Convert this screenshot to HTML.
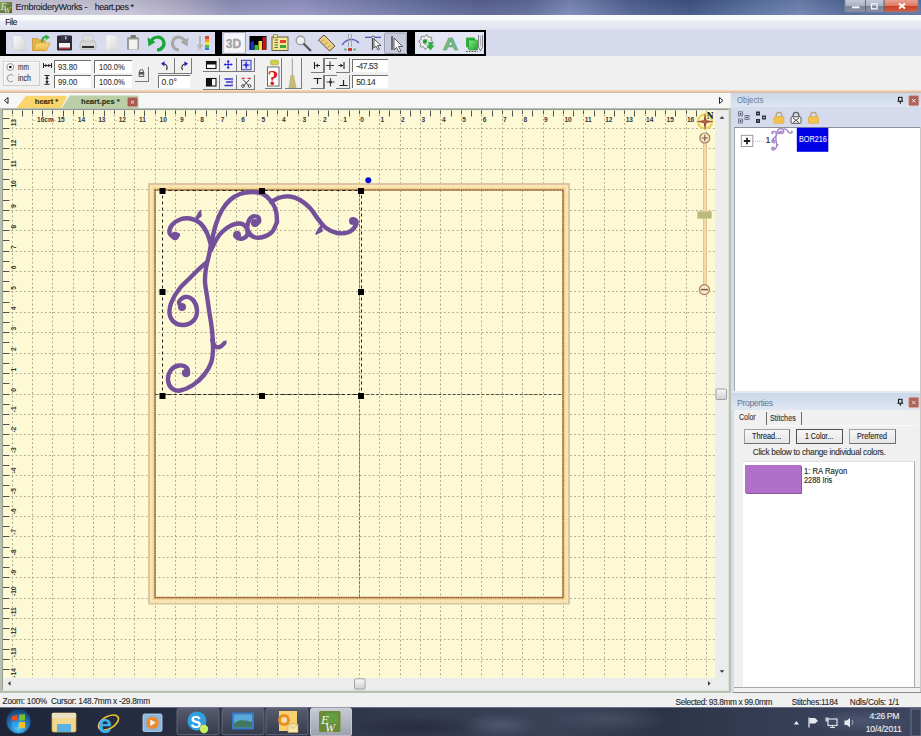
<!DOCTYPE html>
<html><head><meta charset="utf-8">
<style>
*{margin:0;padding:0;box-sizing:border-box}
html,body{width:921px;height:736px;overflow:hidden;background:#f0f0f0;font-family:"Liberation Sans",sans-serif;position:relative}
.a{position:absolute}
.t{position:absolute;white-space:nowrap;line-height:1;-webkit-text-stroke:0.12px currentColor}
.btn{position:absolute;background:linear-gradient(#f6f6f6,#e6e6e6);border:1px solid #a0a0a0;border-right-color:#707070;border-bottom-color:#707070}
.btn span{position:absolute;left:0;right:0;top:3.3px;text-align:center;font-size:8.3px;line-height:1;color:#222;white-space:nowrap;letter-spacing:-0.1px}
.ed{position:absolute;background:#fff;border-top:1.2px solid #707070;border-left:1.2px solid #707070}
.ed span{position:absolute;top:2.2px;font-size:8.4px;line-height:1;color:#3a3a3a;white-space:nowrap}
</style></head><body>
<!-- title bar -->
<div class="a" style="left:0;top:0;width:921px;height:15px;background:linear-gradient(rgba(40,40,70,0.10),rgba(255,255,255,0.08)),linear-gradient(90deg,#cdcdda 0px,#c6c4d6 130px,#b0acc8 180px,#8e90b8 230px,#9494c2 300px,#7c82b0 360px,#64709e 420px,#586090 480px,#5c6a98 530px,#7886b6 570px,#4e6090 630px,#3c5282 690px,#5a72a2 760px,#6a80ae 800px,#4c6492 850px,#5870a0 921px)"></div>

<svg class="a" style="left:0;top:0" width="921" height="15" viewBox="0 0 921 15">
<defs>
<linearGradient id="wbmin" x1="0" y1="0" x2="0" y2="1"><stop offset="0" stop-color="#c4cad8"/><stop offset="0.5" stop-color="#a8b0c4"/><stop offset="0.55" stop-color="#7c8498"/><stop offset="1" stop-color="#8a92a8"/></linearGradient>
<linearGradient id="wbcl" x1="0" y1="0" x2="0" y2="1"><stop offset="0" stop-color="#eaa090"/><stop offset="0.5" stop-color="#dc7a64"/><stop offset="0.55" stop-color="#c84020"/><stop offset="1" stop-color="#d06048"/></linearGradient>
<linearGradient id="appic" x1="0" y1="0" x2="1" y2="1"><stop offset="0" stop-color="#8aa060"/><stop offset="1" stop-color="#4a6028"/></linearGradient>
</defs>
<rect x="0" y="2" width="12" height="11" fill="url(#appic)"/>
<text x="0.5" y="10" font-size="10" font-style="italic" fill="#d8e8c8" font-family="Liberation Serif">E</text>
<text x="3.5" y="13" font-size="8.5" font-style="italic" fill="#d8e8c8" font-family="Liberation Serif">W</text>
<rect x="845" y="-1" width="73" height="13" rx="2" fill="none" stroke="#8890a8" stroke-width="0.8"/>
<rect x="845.3" y="0" width="20" height="11.6" fill="url(#wbmin)"/>
<rect x="865.7" y="0" width="18.2" height="11.6" fill="url(#wbmin)"/>
<rect x="884.3" y="0" width="33.5" height="11.6" fill="url(#wbcl)"/>
<path d="M865.5 0V12M884 0V12" stroke="#58607a" stroke-width="0.8"/>
<rect x="852" y="6.3" width="7.5" height="2" fill="#f4f4f8"/>
<rect x="871.5" y="3.8" width="5.5" height="5" fill="none" stroke="#f4f4f8" stroke-width="1.3"/>
<path d="M899 3.5L905 8.5M905 3.5L899 8.5" stroke="#fff" stroke-width="1.8"/>
</svg>
<!-- menu -->
<div class="a" style="left:0;top:15px;width:921px;height:15px;background:linear-gradient(#fbfbfd 0px,#f7f8fb 5px,#e8eaf4 6.5px,#e3e6f1 13px,#dde0ee 15px)"></div>

<!-- toolbar row -->
<div class="a" style="left:0;top:30px;width:921px;height:26px;background:#d6d9eb"></div>
<div class="a" style="left:0;top:30px;width:486px;height:26px;background:#000"></div>
<div class="a" style="left:6px;top:32px;width:209px;height:22px;background:#d9dcee"></div>
<div class="a" style="left:222px;top:32px;width:185px;height:22px;background:#d9dcee"></div>
<div class="a" style="left:415px;top:32px;width:69px;height:22px;background:#e4e7f3"></div>
<!-- row 2 -->
<div class="a" style="left:0;top:56px;width:921px;height:35px;background:#f0f0f0"></div>
<div class="a" style="left:0;top:89.8px;width:921px;height:3.6px;background:linear-gradient(#f8e0cc,#e8c8aa 50%,#d2b29a)"></div>
<div class="a" style="left:2.5px;top:60.5px;width:37.5px;height:25.5px;border:1px solid #cfcfcf;box-shadow:inset 1px 1px 0 #fff"></div>
<svg class="a" style="left:0;top:56px" width="60" height="35" viewBox="0 56 60 35"><circle cx="10.3" cy="67" r="3.4" fill="#fff" stroke="#8a8a8a" stroke-width="0.9"/><circle cx="10.3" cy="67" r="1.3" fill="#111"/><path d="M13.2 75.5A3.6 3.6 0 1 0 12.8 81.2" fill="none" stroke="#8a8a8a" stroke-width="0.9"/><path d="M43 65.5H51.5M43.5 63V68M51.5 63V68" stroke="#222" stroke-width="1"/><path d="M44 65.5L46.3 63.8V67.2ZM50.5 65.5L48.2 63.8V67.2Z" fill="#222"/><path d="M44.5 75.5H49.5M44.5 84.3H49.5M47 76V84" stroke="#222" stroke-width="1"/><path d="M47 76.5L45.2 79H48.8ZM47 83.5L45.2 81H48.8Z" fill="#222"/></svg>
<div class="ed" style="left:54px;top:60px;width:37px;height:12.5px"></div>
<div class="ed" style="left:54px;top:75px;width:37px;height:12.700000000000003px"></div>
<div class="ed" style="left:94.3px;top:60px;width:37.7px;height:12.799999999999997px"></div>
<div class="ed" style="left:94.3px;top:75.3px;width:37.7px;height:12.600000000000009px"></div>
<div class="ed" style="left:158.3px;top:75.3px;width:32.0px;height:12.299999999999997px"></div>
<div class="ed" style="left:351.5px;top:58.6px;width:36.89999999999998px;height:13.399999999999999px"></div>
<div class="ed" style="left:351.5px;top:75px;width:36.89999999999998px;height:13px"></div>
<div class="a" style="left:134.5px;top:67.3px;width:14.099999999999994px;height:14.5px;border-right:1.3px solid #7a7a7a;border-bottom:1.3px solid #7a7a7a"></div>
<div class="a" style="left:157.7px;top:57.5px;width:17.30000000000001px;height:16.5px;border-right:1.3px solid #7a7a7a;border-bottom:1.3px solid #7a7a7a"></div>
<div class="a" style="left:175px;top:57.5px;width:17px;height:16.5px;border-right:1.3px solid #7a7a7a;border-bottom:1.3px solid #7a7a7a"></div>
<div class="a" style="left:203.3px;top:57.5px;width:16.899999999999977px;height:14.700000000000003px;border-right:1.3px solid #7a7a7a;border-bottom:1.3px solid #7a7a7a"></div>
<div class="a" style="left:203.3px;top:74.8px;width:16.899999999999977px;height:14.799999999999997px;border-right:1.3px solid #7a7a7a;border-bottom:1.3px solid #7a7a7a"></div>
<div class="a" style="left:220.2px;top:57.5px;width:17.0px;height:14.700000000000003px;border-right:1.3px solid #7a7a7a;border-bottom:1.3px solid #7a7a7a"></div>
<div class="a" style="left:220.2px;top:74.8px;width:17.0px;height:14.799999999999997px;border-right:1.3px solid #7a7a7a;border-bottom:1.3px solid #7a7a7a"></div>
<div class="a" style="left:237.2px;top:57.5px;width:17.400000000000006px;height:14.700000000000003px;border-right:1.3px solid #7a7a7a;border-bottom:1.3px solid #7a7a7a"></div>
<div class="a" style="left:237.2px;top:74.8px;width:17.400000000000006px;height:14.799999999999997px;border-right:1.3px solid #7a7a7a;border-bottom:1.3px solid #7a7a7a"></div>
<div class="a" style="left:265.4px;top:57.5px;width:16.600000000000023px;height:31.700000000000003px;border-right:1.3px solid #7a7a7a;border-bottom:1.3px solid #7a7a7a"></div>
<div class="a" style="left:284.6px;top:57.5px;width:17.399999999999977px;height:31.700000000000003px;border-right:1.3px solid #7a7a7a;border-bottom:1.3px solid #7a7a7a"></div>
<div class="a" style="left:311px;top:58.4px;width:13.199999999999989px;height:14.199999999999996px;border-right:1.3px solid #7a7a7a;border-bottom:1.3px solid #7a7a7a"></div>
<div class="a" style="left:323.5px;top:58.4px;width:13.0px;height:14.199999999999996px;border-left:1.3px solid #7a7a7a;border-top:1.3px solid #7a7a7a;background:#f2f2f2"></div>
<div class="a" style="left:336px;top:58.4px;width:14px;height:14.199999999999996px;border-right:1.3px solid #7a7a7a;border-bottom:1.3px solid #7a7a7a"></div>
<div class="a" style="left:311px;top:75.3px;width:13.199999999999989px;height:13.900000000000006px;border-right:1.3px solid #7a7a7a;border-bottom:1.3px solid #7a7a7a"></div>
<div class="a" style="left:323.5px;top:75.3px;width:13.0px;height:13.900000000000006px;border-left:1.3px solid #7a7a7a;border-top:1.3px solid #7a7a7a;background:#f2f2f2"></div>
<div class="a" style="left:336px;top:75.3px;width:14px;height:13.900000000000006px;border-right:1.3px solid #7a7a7a;border-bottom:1.3px solid #7a7a7a"></div>
<svg class="a" style="left:0;top:0" width="400" height="93" viewBox="0 0 400 93">
<rect x="138.7" y="72" width="5.5" height="5" fill="#555"/><path d="M139.6 72.5V71A1.9 1.9 0 0 1 143.3 71V72.5" fill="none" stroke="#555" stroke-width="1"/><rect x="139.6" y="74.5" width="3.8" height="1.6" fill="#ddd"/>
<path d="M166.5 70C168 67 167 64 163.5 63.8" fill="none" stroke="#222" stroke-width="1.1"/><path d="M161 63.8L164.5 61.3V66.3Z" fill="#1a1ad0"/>
<path d="M182.5 70C181 67 182 64 185.5 63.8" fill="none" stroke="#222" stroke-width="1.1"/><path d="M188 63.8L184.5 61.3V66.3Z" fill="#1a1ad0"/>
<rect x="206.5" y="61.5" width="9.5" height="7" fill="#fff" stroke="#111" stroke-width="1.1"/><rect x="206.5" y="61.5" width="9.5" height="3" fill="#111"/>
<path d="M228.2 60.5V68.5M224.2 64.5H232.2" stroke="#2a2ad8" stroke-width="1.2"/><path d="M228.2 60L226.6 62H229.8ZM228.2 69L226.6 67H229.8ZM223.7 64.5L225.7 62.9V66.1ZM232.7 64.5L230.7 62.9V66.1Z" fill="#2a2ad8"/>
<rect x="241.5" y="60.3" width="9.5" height="9.5" fill="#dde" stroke="#3a3ab0" stroke-width="1"/><path d="M246.2 61.5V68.5M242.7 65H249.7" stroke="#2a2ad8" stroke-width="1.2"/><circle cx="246.2" cy="65" r="1.6" fill="#2a2ad8"/>
<rect x="206.5" y="78.5" width="9.5" height="7.5" fill="#fff" stroke="#111" stroke-width="1.1"/><rect x="206.5" y="78.5" width="5.5" height="7.5" fill="#111"/>
<path d="M224.5 79H233M226 82H233M224.5 85.5H233" stroke="#3030c8" stroke-width="1.3"/><path d="M232 78.5V86" stroke="#8888c8" stroke-width="1"/>
<path d="M241.5 78.3H245M247.5 78.3H251" stroke="#e04040" stroke-width="1.2"/>
<path d="M243 79.5L249 86M249.5 79.5L243.5 86" stroke="#333" stroke-width="0.9"/><circle cx="243" cy="86" r="1.4" fill="none" stroke="#333" stroke-width="0.8"/><circle cx="249.5" cy="86" r="1.4" fill="none" stroke="#333" stroke-width="0.8"/>
<rect x="270.5" y="60.2" width="8" height="4.6" rx="1.5" fill="#d4d048" stroke="#a0a030" stroke-width="0.6"/>
<rect x="267.5" y="67" width="11.5" height="19" fill="#fff" stroke="#6a6a6a" stroke-width="1"/>
<text x="267.6" y="85" font-size="21" font-weight="bold" fill="#e01818" font-family="Liberation Serif" textLength="11" lengthAdjust="spacingAndGlyphs">?</text>
<path d="M292.3 58.5V77" stroke="#9a9a9a" stroke-width="1"/>
<path d="M290.5 75L288.5 88H296.5L294 75Z" fill="#c4bc78"/>
<path d="M314.5 62V69M315.5 65.5H320" stroke="#222" stroke-width="1.1"/><path d="M315.5 65.5L318 63.5V67.5Z" fill="#222"/>
<path d="M330 61.5V70M326 65.5H334" stroke="#333" stroke-width="1.1"/>
<path d="M344 62V69M338.5 65.5H343" stroke="#222" stroke-width="1.1"/><path d="M343 65.5L340.5 63.5V67.5Z" fill="#222"/>
<path d="M313.5 78.5H321.5M317.5 78.5V84" stroke="#222" stroke-width="1.2"/>
<path d="M330.5 78V86.5M326.5 82H334.5" stroke="#444" stroke-width="1.1"/><circle cx="330.5" cy="82" r="1.5" fill="#333"/>
<path d="M339.5 85.5H347.5M343.5 80V85.5" stroke="#222" stroke-width="1.2"/>
</svg>
<svg class="a" style="left:0;top:0" width="921" height="93" viewBox="0 0 921 93">
<defs>
<linearGradient id="gpap" x1="0" y1="0" x2="1" y2="1"><stop offset="0" stop-color="#fafafa"/><stop offset="1" stop-color="#d8d8d8"/></linearGradient>
<linearGradient id="gfold" x1="0" y1="0" x2="0" y2="1"><stop offset="0" stop-color="#f8dc78"/><stop offset="1" stop-color="#e8b848"/></linearGradient>
<linearGradient id="ggreen" x1="0" y1="0" x2="0" y2="1"><stop offset="0" stop-color="#50e060"/><stop offset="1" stop-color="#109a30"/></linearGradient>
<linearGradient id="gsq" x1="0" y1="0" x2="1" y2="1"><stop offset="0" stop-color="#80f080"/><stop offset="1" stop-color="#20a030"/></linearGradient>
</defs>
<!-- new -->
<path d="M13 35.5H22L25 38.5V50H13Z" fill="url(#gpap)" stroke="#d0d0d0" stroke-width="0.8"/>
<path d="M22 35.5V38.5H25" fill="#e8e8e8" stroke="#c8c8c8" stroke-width="0.6"/>
<!-- open -->
<path d="M32.5 38.5H38L39.5 40H45V50.5H32.5Z" fill="#e6b448" stroke="#c89030" stroke-width="0.7"/>
<path d="M33 50.5L36 43H50L46.5 50.5Z" fill="url(#gfold)" stroke="#d09a38" stroke-width="0.7"/>
<path d="M42 42C42 38 44 36.5 47 37" fill="none" stroke="#30b040" stroke-width="2.2"/>
<path d="M45.5 34.5L50 37.2L46 40Z" fill="#30b040"/>
<!-- save -->
<rect x="57" y="35.5" width="15" height="15" rx="1" fill="#2c2c3a"/>
<rect x="59" y="43" width="11" height="6" fill="#f4f4f4"/>
<rect x="59" y="47.5" width="11" height="1.6" fill="#c03040"/>
<rect x="61" y="35.5" width="7" height="5" fill="#3a3a4a"/>
<rect x="65" y="36.3" width="1.5" height="3" fill="#bbb"/>
<!-- print -->
<rect x="83" y="35" width="10" height="7" fill="#e0e0e0" stroke="#c0c0c0" stroke-width="0.6"/>
<rect x="80" y="41" width="16" height="8.5" rx="2" fill="#d4d4d4" stroke="#b0b0b0" stroke-width="0.6"/>
<rect x="82" y="46" width="12" height="2" fill="#303030"/>
<!-- copy -->
<path d="M106 35H115L118 38V50H106Z" fill="url(#gpap)" stroke="#d8d8d8" stroke-width="0.7"/>
<!-- paste -->
<rect x="127" y="37" width="12" height="13" rx="1.5" fill="#9a9a9a"/>
<rect x="129" y="39.5" width="8.5" height="10" fill="#f2f2f2"/>
<rect x="130.5" y="35" width="5.5" height="3" rx="1" fill="#7a7a7a"/>
<!-- undo -->
<path d="M151 42.5C152 36 161 35.5 163.5 41C165.5 46 161 50 157 50" fill="none" stroke="#18a838" stroke-width="3.2"/>
<path d="M147.5 37.5L155.5 42L148.5 46.5Z" fill="#18a838"/>
<!-- redo -->
<path d="M185 42.5C184 36 175 35.5 173 41C171 46 175 50 179 50" fill="none" stroke="#a8a8a8" stroke-width="3.2"/>
<path d="M188.5 37.5L180.5 42L187.5 46.5Z" fill="#a8a8a8"/>
<!-- sort -->
<path d="M200 36V46" stroke="#b8b8b8" stroke-width="2"/>
<path d="M196.5 44.5H203.5L200 50Z" fill="#b8b8b8"/>
<path d="M197 50H204" stroke="#c8c8c8" stroke-width="1"/>
<rect x="205" y="36" width="4" height="3" fill="#e04040"/>
<rect x="205" y="39" width="4" height="3" fill="#f0a020"/>
<rect x="205" y="42" width="4" height="3" fill="#f0e040"/>
<rect x="205" y="45" width="4" height="2.5" fill="#40c040"/>
<rect x="205" y="47.5" width="4" height="2.5" fill="#3080e0"/>
<!-- 3D pressed -->
<rect x="223" y="32.5" width="22.5" height="21" fill="#eceef6" stroke="#a4a8b8" stroke-width="1"/>
<rect x="225" y="34.5" width="18.5" height="17" fill="#f6f6fa"/>
<text x="225.8" y="48" font-size="12" font-weight="bold" fill="#a4a4a4" stroke="#9a9a9a" stroke-width="0.3" font-family="Liberation Sans" textLength="15.5" lengthAdjust="spacingAndGlyphs">3D</text>
<!-- bar chart -->
<rect x="249.5" y="36" width="17" height="14" fill="#000"/>
<rect x="250.5" y="41.5" width="3.5" height="8.5" fill="#1030d0"/>
<rect x="254.5" y="45" width="3.5" height="5" fill="#30c040"/>
<rect x="258.5" y="41" width="3.5" height="9" fill="#f0e030"/>
<rect x="262.5" y="37" width="3.5" height="13" fill="#d01010"/>
<!-- thread list -->
<rect x="272" y="37" width="16" height="13.5" fill="#f2ea90" stroke="#585030" stroke-width="0.9"/>
<rect x="273.5" y="34.8" width="4" height="3" fill="#f2ea90" stroke="#807040" stroke-width="0.7"/>
<rect x="280" y="40" width="6" height="3" fill="#e04030"/>
<rect x="280" y="45" width="6" height="3" fill="#40a040"/>
<path d="M274.5 40H278M274.5 42.5H278M274.5 45H278M274.5 47.5H278" stroke="#404040" stroke-width="0.8"/>
<!-- magnifier -->
<circle cx="300.5" cy="40.5" r="4.3" fill="#f0f0f0" stroke="#a0a0a0" stroke-width="1.4"/>
<path d="M303.5 43.5L311 51" stroke="#555" stroke-width="2.2"/>
<!-- ruler -->
<path d="M318.5 40L324 35L335 46L329.5 51Z" fill="#ecd080" stroke="#58503a" stroke-width="1"/>
<path d="M322 41.5L324 39.5M325 44.5L327 42.5M328 47.5L330 45.5" stroke="#806838" stroke-width="0.8"/>
<!-- needle -->
<path d="M342 45C347 38 354 38 359 43" fill="none" stroke="#5060c0" stroke-width="1.3"/>
<path d="M348.5 34V47M351.5 34V47" stroke="#a8a8a8" stroke-width="1"/>
<rect x="348" y="48" width="4" height="3" fill="#c04040"/>
<path d="M347 49.5L344.5 48V51ZM353 49.5L355.5 48V51Z" fill="#40a040"/>
<!-- pick -->
<path d="M365 37.3H381" stroke="#4050c0" stroke-width="1.2"/>
<circle cx="373" cy="37.3" r="1.3" fill="#fff" stroke="#333" stroke-width="0.7"/>
<path d="M372.5 38.5V50" stroke="#444" stroke-width="1.2"/>
<path d="M374 39V48L376 46L378 50L379.5 49.2L377.5 45.5H381Z" fill="#fff" stroke="#333" stroke-width="0.8"/>
<!-- pointer pressed -->
<rect x="384.5" y="33" width="22" height="20.5" rx="1" fill="#c8ccdc" stroke="#9ca0b2" stroke-width="1"/>
<path d="M392 36V50" stroke="#444" stroke-width="1.4"/>
<path d="M394 38V50L396.5 47.5L399 52L401 51L398.5 46.5H402.5Z" fill="#fff" stroke="#333" stroke-width="0.8"/>
<!-- gear -->
<path d="M433.20 42.00 L433.06 43.40 L431.17 44.14 L430.66 45.11 L431.09 47.09 L430.00 47.99 L428.14 47.17 L427.09 47.49 L426.00 49.20 L424.60 49.06 L423.86 47.17 L422.89 46.66 L420.91 47.09 L420.01 46.00 L420.83 44.14 L420.51 43.09 L418.80 42.00 L418.94 40.60 L420.83 39.86 L421.34 38.89 L420.91 36.91 L422.00 36.01 L423.86 36.83 L424.91 36.51 L426.00 34.80 L427.40 34.94 L428.14 36.83 L429.11 37.34 L431.09 36.91 L431.99 38.00 L431.17 39.86 L431.49 40.91Z" fill="#ececec" stroke="#8a8a8a" stroke-width="1"/>
<circle cx="426" cy="42" r="2.6" fill="#ffffff" stroke="#a0a0a0" stroke-width="0.6"/>
<circle cx="425" cy="41.5" r="2.2" fill="#2a9a40"/>
<rect x="428.5" y="42" width="4" height="4" fill="#30b040"/>
<path d="M426.5 45.5H434.5L430.5 50.5Z" fill="#30b040"/>
<!-- A -->
<text x="442.8" y="49.8" font-size="17" font-weight="bold" fill="#74bc84" stroke="#5a9a68" stroke-width="0.5" font-family="Liberation Sans" textLength="15.5" lengthAdjust="spacingAndGlyphs">A</text>
<!-- green squares -->
<rect x="466" y="37.5" width="9" height="10" rx="1" fill="#30b040"/>
<rect x="468.5" y="40" width="9" height="10" rx="1" fill="url(#gsq)" stroke="#208030" stroke-width="0.6"/>
<path d="M466 51.5H478" stroke="#505050" stroke-width="1.2" stroke-dasharray="1.6 1.2"/>
<path d="M478.5 35V47L480.5 51L482.5 47V35" fill="none" stroke="#686868" stroke-width="0.8"/><path d="M480.5 36V46" stroke="#909090" stroke-width="0.6"/>
</svg>
<!-- tab bar -->
<div class="a" style="left:0;top:93px;width:730px;height:15px;background:#f6f6f6"></div>
<svg class="a" style="left:0;top:93px" width="150" height="16" viewBox="0 93 150 16">
<path d="M4.5 100.5L8 97.5V103.5Z" fill="none" stroke="#222" stroke-width="1"/>
<path d="M16.5 108L26 95.8H65L67 97L61 108Z" fill="#f9d56c"/>
<path d="M61.5 108L69.5 95.6H136.5Q138.5 95.6 138.5 97.6V108Z" fill="#bccea6"/>
<path d="M61.3 108L69.3 95.6" stroke="#f4f4f4" stroke-width="0.8"/>
<rect x="127.5" y="97.5" width="10" height="9" rx="1.2" fill="#a8584e" stroke="#c89088" stroke-width="0.8"/>
<path d="M130.8 100.5L134.2 103.8M134.2 100.5L130.8 103.8" stroke="#f0e0e0" stroke-width="1"/>
</svg>


<!-- canvas frame -->
<div class="a" style="left:0;top:107.8px;width:731px;height:585.5px;background:#b8c0b4"></div>
<div class="a" style="left:2.3px;top:109.2px;width:727px;height:582px;background:#ececec;border-left:1.3px solid #949c8c;border-top:1.3px solid #949c8c;border-right:1px solid #dde4d6;border-bottom:1px solid #dde4d6"></div>
<svg class="a" style="left:0;top:0" width="921" height="736" viewBox="0 0 921 736">
<rect x="3" y="110.5" width="712" height="567.5" fill="#fdf9d5"/>
<path d="M12.5 110.5V678M32.5 110.5V678M52.5 110.5V678M73.5 110.5V678M93.5 110.5V678M114.5 110.5V678M134.5 110.5V678M155.5 110.5V678M175.5 110.5V678M195.5 110.5V678M216.5 110.5V678M236.5 110.5V678M257.5 110.5V678M277.5 110.5V678M298.5 110.5V678M318.5 110.5V678M338.5 110.5V678M359.5 110.5V678M379.5 110.5V678M400.5 110.5V678M420.5 110.5V678M440.5 110.5V678M461.5 110.5V678M481.5 110.5V678M502.5 110.5V678M522.5 110.5V678M543.5 110.5V678M563.5 110.5V678M583.5 110.5V678M604.5 110.5V678M624.5 110.5V678M645.5 110.5V678M665.5 110.5V678M686.5 110.5V678M706.5 110.5V678" stroke="#a9a78c" stroke-width="1" stroke-dasharray="1.8 2.4" fill="none"/>
<path d="M3 128.5H715M3 148.5H715M3 169.5H715M3 189.5H715M3 210.5H715M3 230.5H715M3 251.5H715M3 271.5H715M3 291.5H715M3 312.5H715M3 332.5H715M3 353.5H715M3 373.5H715M3 394.5H715M3 414.5H715M3 434.5H715M3 455.5H715M3 475.5H715M3 496.5H715M3 516.5H715M3 536.5H715M3 557.5H715M3 577.5H715M3 598.5H715M3 618.5H715M3 639.5H715M3 659.5H715" stroke="#adab90" stroke-width="1" stroke-dasharray="1.8 2.4" fill="none"/>
<path d="M22.5 110.5V116.5M12.5 110.5V114M42.5 110.5V116.5M32.5 110.5V114M63.5 110.5V116.5M52.5 110.5V114M83.5 110.5V116.5M73.5 110.5V114M104.5 110.5V116.5M93.5 110.5V114M124.5 110.5V116.5M114.5 110.5V114M144.5 110.5V116.5M134.5 110.5V114M165.5 110.5V116.5M155.5 110.5V114M185.5 110.5V116.5M175.5 110.5V114M206.5 110.5V116.5M195.5 110.5V114M226.5 110.5V116.5M216.5 110.5V114M246.5 110.5V116.5M236.5 110.5V114M267.5 110.5V116.5M257.5 110.5V114M287.5 110.5V116.5M277.5 110.5V114M308.5 110.5V116.5M298.5 110.5V114M328.5 110.5V116.5M318.5 110.5V114M349.5 110.5V116.5M338.5 110.5V114M369.5 110.5V116.5M359.5 110.5V114M389.5 110.5V116.5M379.5 110.5V114M410.5 110.5V116.5M400.5 110.5V114M430.5 110.5V116.5M420.5 110.5V114M451.5 110.5V116.5M440.5 110.5V114M471.5 110.5V116.5M461.5 110.5V114M492.5 110.5V116.5M481.5 110.5V114M512.5 110.5V116.5M502.5 110.5V114M532.5 110.5V116.5M522.5 110.5V114M553.5 110.5V116.5M543.5 110.5V114M573.5 110.5V116.5M563.5 110.5V114M594.5 110.5V116.5M583.5 110.5V114M614.5 110.5V116.5M604.5 110.5V114M634.5 110.5V116.5M624.5 110.5V114M655.5 110.5V116.5M645.5 110.5V114M675.5 110.5V116.5M665.5 110.5V114M696.5 110.5V116.5M686.5 110.5V114" stroke="#505050" stroke-width="1" fill="none"/>
<path d="M3 118.5H9.5M3 128.5H9.5M3 138.5H9.5M3 148.5H9.5M3 159.5H9.5M3 169.5H9.5M3 179.5H9.5M3 189.5H9.5M3 200.5H9.5M3 210.5H9.5M3 220.5H9.5M3 230.5H9.5M3 240.5H9.5M3 251.5H9.5M3 261.5H9.5M3 271.5H9.5M3 281.5H9.5M3 291.5H9.5M3 302.5H9.5M3 312.5H9.5M3 322.5H9.5M3 332.5H9.5M3 342.5H9.5M3 353.5H9.5M3 363.5H9.5M3 373.5H9.5M3 383.5H9.5M3 394.5H9.5M3 404.5H9.5M3 414.5H9.5M3 424.5H9.5M3 434.5H9.5M3 445.5H9.5M3 455.5H9.5M3 465.5H9.5M3 475.5H9.5M3 485.5H9.5M3 496.5H9.5M3 506.5H9.5M3 516.5H9.5M3 526.5H9.5M3 536.5H9.5M3 547.5H9.5M3 557.5H9.5M3 567.5H9.5M3 577.5H9.5M3 587.5H9.5M3 598.5H9.5M3 608.5H9.5M3 618.5H9.5M3 628.5H9.5M3 639.5H9.5M3 649.5H9.5M3 659.5H9.5M3 669.5H9.5" stroke="#505050" stroke-width="1" fill="none"/>
<text x="33.6" y="122.3" font-size="6.6" fill="#383838" font-family="Liberation Sans" font-weight="bold"><tspan fill="#606060" font-size="5.5" font-weight="normal">- </tspan>16cm</text>
<text x="54.0" y="122.3" font-size="6.6" fill="#383838" font-family="Liberation Sans" font-weight="bold"><tspan fill="#606060" font-size="5.5" font-weight="normal">- </tspan>15</text>
<text x="74.4" y="122.3" font-size="6.6" fill="#383838" font-family="Liberation Sans" font-weight="bold"><tspan fill="#606060" font-size="5.5" font-weight="normal">- </tspan>14</text>
<text x="94.8" y="122.3" font-size="6.6" fill="#383838" font-family="Liberation Sans" font-weight="bold"><tspan fill="#606060" font-size="5.5" font-weight="normal">- </tspan>13</text>
<text x="115.3" y="122.3" font-size="6.6" fill="#383838" font-family="Liberation Sans" font-weight="bold"><tspan fill="#606060" font-size="5.5" font-weight="normal">- </tspan>12</text>
<text x="135.7" y="122.3" font-size="6.6" fill="#383838" font-family="Liberation Sans" font-weight="bold"><tspan fill="#606060" font-size="5.5" font-weight="normal">- </tspan>11</text>
<text x="156.1" y="122.3" font-size="6.6" fill="#383838" font-family="Liberation Sans" font-weight="bold"><tspan fill="#606060" font-size="5.5" font-weight="normal">- </tspan>10</text>
<text x="176.5" y="122.3" font-size="6.6" fill="#383838" font-family="Liberation Sans" font-weight="bold"><tspan fill="#606060" font-size="5.5" font-weight="normal">- </tspan>9</text>
<text x="196.9" y="122.3" font-size="6.6" fill="#383838" font-family="Liberation Sans" font-weight="bold"><tspan fill="#606060" font-size="5.5" font-weight="normal">- </tspan>8</text>
<text x="217.4" y="122.3" font-size="6.6" fill="#383838" font-family="Liberation Sans" font-weight="bold"><tspan fill="#606060" font-size="5.5" font-weight="normal">- </tspan>7</text>
<text x="237.8" y="122.3" font-size="6.6" fill="#383838" font-family="Liberation Sans" font-weight="bold"><tspan fill="#606060" font-size="5.5" font-weight="normal">- </tspan>6</text>
<text x="258.2" y="122.3" font-size="6.6" fill="#383838" font-family="Liberation Sans" font-weight="bold"><tspan fill="#606060" font-size="5.5" font-weight="normal">- </tspan>5</text>
<text x="278.6" y="122.3" font-size="6.6" fill="#383838" font-family="Liberation Sans" font-weight="bold"><tspan fill="#606060" font-size="5.5" font-weight="normal">- </tspan>4</text>
<text x="299.0" y="122.3" font-size="6.6" fill="#383838" font-family="Liberation Sans" font-weight="bold"><tspan fill="#606060" font-size="5.5" font-weight="normal">- </tspan>3</text>
<text x="319.5" y="122.3" font-size="6.6" fill="#383838" font-family="Liberation Sans" font-weight="bold"><tspan fill="#606060" font-size="5.5" font-weight="normal">- </tspan>2</text>
<text x="339.9" y="122.3" font-size="6.6" fill="#383838" font-family="Liberation Sans" font-weight="bold"><tspan fill="#606060" font-size="5.5" font-weight="normal">- </tspan>1</text>
<text x="360.2" y="122.3" font-size="6.6" fill="#383838" font-family="Liberation Sans" font-weight="bold">0</text>
<text x="380.6" y="122.3" font-size="6.6" fill="#383838" font-family="Liberation Sans" font-weight="bold">1</text>
<text x="401.0" y="122.3" font-size="6.6" fill="#383838" font-family="Liberation Sans" font-weight="bold">2</text>
<text x="421.5" y="122.3" font-size="6.6" fill="#383838" font-family="Liberation Sans" font-weight="bold">3</text>
<text x="441.9" y="122.3" font-size="6.6" fill="#383838" font-family="Liberation Sans" font-weight="bold">4</text>
<text x="462.3" y="122.3" font-size="6.6" fill="#383838" font-family="Liberation Sans" font-weight="bold">5</text>
<text x="482.7" y="122.3" font-size="6.6" fill="#383838" font-family="Liberation Sans" font-weight="bold">6</text>
<text x="503.1" y="122.3" font-size="6.6" fill="#383838" font-family="Liberation Sans" font-weight="bold">7</text>
<text x="523.6" y="122.3" font-size="6.6" fill="#383838" font-family="Liberation Sans" font-weight="bold">8</text>
<text x="544.0" y="122.3" font-size="6.6" fill="#383838" font-family="Liberation Sans" font-weight="bold">9</text>
<text x="564.4" y="122.3" font-size="6.6" fill="#383838" font-family="Liberation Sans" font-weight="bold">10</text>
<text x="584.8" y="122.3" font-size="6.6" fill="#383838" font-family="Liberation Sans" font-weight="bold">11</text>
<text x="605.2" y="122.3" font-size="6.6" fill="#383838" font-family="Liberation Sans" font-weight="bold">12</text>
<text x="625.7" y="122.3" font-size="6.6" fill="#383838" font-family="Liberation Sans" font-weight="bold">13</text>
<text x="646.1" y="122.3" font-size="6.6" fill="#383838" font-family="Liberation Sans" font-weight="bold">14</text>
<text x="666.5" y="122.3" font-size="6.6" fill="#383838" font-family="Liberation Sans" font-weight="bold">15</text>
<text x="686.9" y="122.3" font-size="6.6" fill="#383838" font-family="Liberation Sans" font-weight="bold">16</text>
<text transform="translate(16 126.3) rotate(-90)" font-size="6.6" fill="#383838" font-family="Liberation Sans" font-weight="bold">13</text>
<text transform="translate(16 146.8) rotate(-90)" font-size="6.6" fill="#383838" font-family="Liberation Sans" font-weight="bold">12</text>
<text transform="translate(16 167.2) rotate(-90)" font-size="6.6" fill="#383838" font-family="Liberation Sans" font-weight="bold">11</text>
<text transform="translate(16 187.6) rotate(-90)" font-size="6.6" fill="#383838" font-family="Liberation Sans" font-weight="bold">10</text>
<text transform="translate(16 208.0) rotate(-90)" font-size="6.6" fill="#383838" font-family="Liberation Sans" font-weight="bold">9</text>
<text transform="translate(16 228.4) rotate(-90)" font-size="6.6" fill="#383838" font-family="Liberation Sans" font-weight="bold">8</text>
<text transform="translate(16 248.9) rotate(-90)" font-size="6.6" fill="#383838" font-family="Liberation Sans" font-weight="bold">7</text>
<text transform="translate(16 269.3) rotate(-90)" font-size="6.6" fill="#383838" font-family="Liberation Sans" font-weight="bold">6</text>
<text transform="translate(16 289.7) rotate(-90)" font-size="6.6" fill="#383838" font-family="Liberation Sans" font-weight="bold">5</text>
<text transform="translate(16 310.1) rotate(-90)" font-size="6.6" fill="#383838" font-family="Liberation Sans" font-weight="bold">4</text>
<text transform="translate(16 330.5) rotate(-90)" font-size="6.6" fill="#383838" font-family="Liberation Sans" font-weight="bold">3</text>
<text transform="translate(16 351.0) rotate(-90)" font-size="6.6" fill="#383838" font-family="Liberation Sans" font-weight="bold">2</text>
<text transform="translate(16 371.4) rotate(-90)" font-size="6.6" fill="#383838" font-family="Liberation Sans" font-weight="bold">1</text>
<text transform="translate(16 391.8) rotate(-90)" font-size="6.6" fill="#383838" font-family="Liberation Sans" font-weight="bold">0</text>
<text transform="translate(16 412.2) rotate(-90)" font-size="6.6" fill="#383838" font-family="Liberation Sans" font-weight="bold">-1</text>
<text transform="translate(16 432.6) rotate(-90)" font-size="6.6" fill="#383838" font-family="Liberation Sans" font-weight="bold">-2</text>
<text transform="translate(16 453.1) rotate(-90)" font-size="6.6" fill="#383838" font-family="Liberation Sans" font-weight="bold">-3</text>
<text transform="translate(16 473.5) rotate(-90)" font-size="6.6" fill="#383838" font-family="Liberation Sans" font-weight="bold">-4</text>
<text transform="translate(16 493.9) rotate(-90)" font-size="6.6" fill="#383838" font-family="Liberation Sans" font-weight="bold">-5</text>
<text transform="translate(16 514.3) rotate(-90)" font-size="6.6" fill="#383838" font-family="Liberation Sans" font-weight="bold">-6</text>
<text transform="translate(16 534.7) rotate(-90)" font-size="6.6" fill="#383838" font-family="Liberation Sans" font-weight="bold">-7</text>
<text transform="translate(16 555.2) rotate(-90)" font-size="6.6" fill="#383838" font-family="Liberation Sans" font-weight="bold">-8</text>
<text transform="translate(16 575.6) rotate(-90)" font-size="6.6" fill="#383838" font-family="Liberation Sans" font-weight="bold">-9</text>
<text transform="translate(16 596.0) rotate(-90)" font-size="6.6" fill="#383838" font-family="Liberation Sans" font-weight="bold">-10</text>
<text transform="translate(16 616.4) rotate(-90)" font-size="6.6" fill="#383838" font-family="Liberation Sans" font-weight="bold">-11</text>
<text transform="translate(16 636.8) rotate(-90)" font-size="6.6" fill="#383838" font-family="Liberation Sans" font-weight="bold">-12</text>
<text transform="translate(16 657.3) rotate(-90)" font-size="6.6" fill="#383838" font-family="Liberation Sans" font-weight="bold">-13</text>
<text transform="translate(16 677.7) rotate(-90)" font-size="6.6" fill="#383838" font-family="Liberation Sans" font-weight="bold">-14</text>
<path d="M719.5 97.5V103.5L723 100.5Z" fill="none" stroke="#222" stroke-width="1"/>
<path d="M719.6 118.8H724.4L722 116.3Z" fill="#333"/>
<path d="M719.6 670.3H724.4L722 672.8Z" fill="#333"/>
<path d="M708 681V685.8L710.5 683.4Z" fill="#333"/>
<path d="M10.5 681V685.8L8 683.4Z" fill="#333"/>
<defs><linearGradient id="thumb" x1="0" y1="0" x2="0" y2="1"><stop offset="0" stop-color="#f8f8f8"/><stop offset="1" stop-color="#d0d0d0"/></linearGradient></defs><rect x="716" y="389" width="10.5" height="10.5" rx="1" fill="url(#thumb)" stroke="#9a9a9a" stroke-width="0.9"/>
<rect x="354.5" y="678.8" width="10.5" height="10.3" rx="1" fill="url(#thumb)" stroke="#9a9a9a" stroke-width="0.9"/>
<!-- hoop -->
<rect x="149" y="184" width="420" height="419.6" fill="none" stroke="#dec6a0" stroke-width="2"/>
<rect x="151.2" y="186.2" width="415.6" height="415.2" fill="none" stroke="#fbe5b6" stroke-width="2.4"/>
<rect x="153.3" y="188.3" width="411.4" height="411" fill="none" stroke="#f2d68e" stroke-width="1.8"/>
<rect x="155" y="190" width="408" height="407.6" fill="none" stroke="#a87446" stroke-width="1.3"/>
<rect x="155" y="190" width="408" height="407.6" fill="none" stroke="#94603a" stroke-width="2" stroke-dasharray="1 1.2" opacity="0.6"/>
<!-- center lines -->
<path d="M359.5 190V598" stroke="#7a7a68" stroke-width="1" stroke-dasharray="3 1.3"/>
<path d="M155 394.5H563" stroke="#505048" stroke-width="1" stroke-dasharray="3 1.8"/>
<!-- selection -->
<path d="M162.5 190.5H361.5V394.5H162.5Z" fill="none" stroke="#222" stroke-width="1" stroke-dasharray="3 3"/>
<g fill="none" stroke="#74509a" stroke-linecap="round" stroke-linejoin="round">
<path d="M277.0 222.0C276.8 220.2 277.0 214.5 276.0 211.0C275.0 207.5 273.2 203.8 271.0 201.0C268.8 198.2 266.2 195.5 263.0 194.0C259.8 192.5 255.8 192.0 252.0 192.0C248.2 192.0 243.7 192.7 240.0 194.0C236.3 195.3 233.0 197.3 230.0 200.0C227.0 202.7 224.3 206.0 222.0 210.0C219.7 214.0 217.7 219.0 216.0 224.0C214.3 229.0 213.2 234.8 212.0 240.0C210.8 245.2 210.0 250.3 209.0 255.0C208.0 259.7 206.7 263.5 206.0 268.0C205.3 272.5 204.8 277.3 205.0 282.0C205.2 286.7 206.3 291.3 207.0 296.0C207.7 300.7 208.2 304.3 209.0 310.0C209.8 315.7 211.3 323.3 212.0 330.0C212.7 336.7 213.2 344.5 213.0 350.0C212.8 355.5 212.5 358.8 211.0 363.0C209.5 367.2 207.0 371.3 204.0 375.0C201.0 378.7 197.0 382.4 193.0 385.0C189.0 387.6 183.5 389.9 180.0 390.5C176.5 391.1 174.0 390.2 172.0 388.5C170.0 386.8 168.2 383.1 168.0 380.0C167.8 376.9 169.2 372.4 171.0 370.0C172.8 367.6 176.3 365.8 179.0 365.5C181.7 365.2 185.5 366.6 187.0 368.0C188.5 369.4 187.8 373.0 188.0 374.0" stroke-width="4.4"/>
<path d="M277.0 222.0C276.2 223.7 274.3 229.5 272.0 232.0C269.7 234.5 266.0 236.2 263.0 237.0C260.0 237.8 256.5 238.0 254.0 237.0C251.5 236.0 249.0 233.3 248.0 231.0C247.0 228.7 247.3 225.3 248.0 223.0C248.7 220.7 250.3 218.0 252.0 217.0C253.7 216.0 256.8 216.2 258.0 217.0C259.2 217.8 259.5 220.8 259.0 222.0C258.5 223.2 255.7 223.7 255.0 224.0" stroke-width="4.4"/>
<path d="M271.0 202.0C272.5 201.2 276.8 198.4 280.0 197.5C283.2 196.6 286.7 196.1 290.0 196.5C293.3 196.9 296.7 198.1 300.0 200.0C303.3 201.9 307.0 204.8 310.0 208.0C313.0 211.2 315.3 215.7 318.0 219.0C320.7 222.3 322.8 225.7 326.0 228.0C329.2 230.3 333.2 232.3 337.0 233.0C340.8 233.7 345.9 233.2 349.0 232.0C352.1 230.8 354.3 227.9 355.5 226.0C356.7 224.1 356.6 221.5 356.0 220.5C355.4 219.5 352.7 220.1 352.0 220.0" stroke-width="4.4"/>
<path d="M211.0 245.0C210.3 243.0 208.8 236.7 207.0 233.0C205.2 229.3 202.8 225.4 200.0 223.0C197.2 220.6 193.3 219.1 190.0 218.5C186.7 217.9 183.0 218.4 180.0 219.5C177.0 220.6 173.8 222.8 172.0 225.0C170.2 227.2 169.2 231.0 169.5 233.0C169.8 235.0 172.6 236.7 174.0 237.0C175.4 237.3 177.3 235.3 178.0 235.0" stroke-width="4.4"/>
<path d="M211.0 250.0C211.8 248.3 214.2 243.0 216.0 240.0C217.8 237.0 219.5 234.4 222.0 232.0C224.5 229.6 228.0 226.9 231.0 225.5C234.0 224.1 237.5 223.2 240.0 223.5C242.5 223.8 244.8 225.2 246.0 227.0C247.2 228.8 248.0 232.1 247.5 234.0C247.0 235.9 244.8 237.9 243.0 238.5C241.2 239.1 238.0 238.4 237.0 237.5C236.0 236.6 237.0 233.8 237.0 233.0" stroke-width="4.4"/>
<path d="M207.0 262.0C205.7 263.2 201.8 266.3 199.0 269.0C196.2 271.7 193.2 274.8 190.0 278.0C186.8 281.2 183.0 284.2 180.0 288.0C177.0 291.8 173.8 296.8 172.0 301.0C170.2 305.2 169.2 309.5 169.5 313.0C169.8 316.5 171.6 320.0 174.0 322.0C176.4 324.0 180.7 325.3 184.0 325.0C187.3 324.7 191.8 322.5 194.0 320.0C196.2 317.5 197.2 313.3 197.0 310.0C196.8 306.7 195.0 302.2 193.0 300.0C191.0 297.8 187.3 296.7 185.0 297.0C182.7 297.3 179.5 300.2 179.0 302.0C178.5 303.8 181.5 307.0 182.0 308.0" stroke-width="4.4"/>
<path d="M212.0 340.0C212.5 341.0 213.7 344.8 215.0 346.0C216.3 347.2 218.4 347.5 220.0 347.0C221.6 346.5 223.8 343.7 224.5 343.0" stroke-width="4.2"/>
</g><g fill="#74509a">
<circle cx="175" cy="236" r="4.2"/>
<circle cx="353" cy="221" r="4"/>
<circle cx="255" cy="223" r="4"/>
<circle cx="237" cy="235" r="4"/>
<circle cx="182" cy="307" r="4"/>
<circle cx="186" cy="373" r="4.2"/>
<path d="M195 221 L198 214 L200.5 210.5 L201 216Z" stroke="#74509a" stroke-width="1.5" stroke-linejoin="round"/>
<path d="M321 226 L318 230 L316 234 L322 231Z" stroke="#74509a" stroke-width="1.5" stroke-linejoin="round"/>
<path d="M218 346 L224 344 L226 341 L222 347Z" stroke="#74509a" stroke-width="1.5" stroke-linejoin="round"/>
</g>
<g fill="#000">
<rect x="159.5" y="188" width="6" height="6"/><rect x="259" y="188" width="6" height="6"/><rect x="358" y="188" width="6" height="6"/>
<rect x="159.5" y="289" width="6" height="6"/><rect x="358" y="289" width="6" height="6"/>
<rect x="159.5" y="393" width="6" height="6"/><rect x="259" y="393" width="6" height="6"/><rect x="358" y="393" width="6" height="6"/>
</g>
<circle cx="368.3" cy="180.3" r="3" fill="#0a10d8"/>
<!-- compass -->
<circle cx="705" cy="121.6" r="8.5" fill="#fcf0b0" opacity="0.5"/>
<circle cx="705" cy="121.6" r="7" fill="none" stroke="#ecd060" stroke-width="2"/>
<path d="M705 112.5L706.3 120.3L714 121.6L706.3 122.9L705 131L703.7 122.9L696 121.6L703.7 120.3Z" fill="#9a4a30"/>
<circle cx="705" cy="121.6" r="1.5" fill="#b86a48"/>
<text x="706.8" y="119.3" font-size="9.5" font-weight="bold" font-family="Liberation Serif" fill="#111">N</text>
<!-- zoom slider -->
<path d="M705 143V285" stroke="#e7c48c" stroke-width="4"/>
<path d="M705 143V285" stroke="#f7e0b8" stroke-width="1.5"/>
<circle cx="704.8" cy="138" r="5" fill="#fbe8c8" stroke="#a08058" stroke-width="1.2"/>
<path d="M701.5 138H708M704.8 134.7V141.3" stroke="#806048" stroke-width="1.2"/>
<circle cx="704.4" cy="289.6" r="5" fill="#fbe8c8" stroke="#a08058" stroke-width="1.2"/>
<path d="M701 289.6H708" stroke="#806048" stroke-width="1.5"/>
<rect x="697.5" y="211.5" width="14" height="6.8" fill="#b9bb7c" stroke="#d0cc98" stroke-width="0.8"/>
</svg>
<!-- right panel -->
<div class="a" style="left:731px;top:93px;width:190px;height:600px;background:#f0f0f0"></div>
<div class="a" style="left:731px;top:107px;width:3px;height:586px;background:#d6dce8"></div>
<div class="a" style="left:731px;top:93px;width:190px;height:14px;background:linear-gradient(#cbd8e8,#dde5f1)"></div>

<div class="a" style="left:731px;top:107px;width:190px;height:20px;background:#d5dbed"></div>
<svg class="a" style="left:731px;top:93px" width="190" height="60" viewBox="731 93 190 60">
<path d="M898.5 97.3V101M902 97.3V101M897.5 101.2H903.2M900.3 101.2V103.8" stroke="#111" stroke-width="1.1"/><path d="M898.3 97.3H902.3" stroke="#111" stroke-width="1"/>
<rect x="908.8" y="95.5" width="10" height="10.3" rx="1.2" fill="#b06058" stroke="#d8a8a0" stroke-width="0.8"/>
<path d="M912 99L915.5 102.5M915.5 99L912 102.5" stroke="#f4e4e4" stroke-width="1"/>
<g fill="#e4e8f2" stroke="#6a7288" stroke-width="0.9"><rect x="738.5" y="111.8" width="4" height="4"/><rect x="745" y="115.5" width="4" height="4"/><rect x="738.5" y="119" width="4" height="4"/></g><g fill="#2a3040"><rect x="739.7" y="113" width="1.6" height="1.6"/><rect x="746.2" y="116.7" width="1.6" height="1.6"/><rect x="739.7" y="120.2" width="1.6" height="1.6"/></g>
<path d="M742.5 114H744M742.5 121H744" stroke="#b0b8c8" stroke-width="0.7"/>
<g fill="#2a3040"><rect x="756" y="111.5" width="4" height="4"/><rect x="762" y="115.5" width="4" height="4"/><rect x="756" y="119" width="4" height="4"/></g>
<path d="M757 113.5H759M763 117.5H765M764 116.5V118.5M757 121H759" stroke="#ddd" stroke-width="0.6"/>
<g><path d="M776.2 117V115.2A2.8 2.8 0 0 1 781.8 115.2V117" fill="none" stroke="#b8a070" stroke-width="1.1"/><rect x="774" y="116.8" width="10" height="6.5" rx="0.8" fill="#f6c44c" stroke="#d8a030" stroke-width="0.6"/></g>
<g><path d="M793.2 117V115.2A2.8 2.8 0 0 1 798.8 115.2V117" fill="none" stroke="#606060" stroke-width="1.3"/><rect x="791" y="116.8" width="10" height="6.5" rx="0.8" fill="#fafafa" stroke="#404040" stroke-width="0.9"/><path d="M793 118L799 122.5M799 118L793 122.5" stroke="#333" stroke-width="0.9"/></g>
<g><path d="M810.7 117V115.2A2.8 2.8 0 0 1 816.3 115.2V117" fill="none" stroke="#b8a070" stroke-width="1.1"/><rect x="808.5" y="116.8" width="10" height="6.5" rx="0.8" fill="#f6c44c" stroke="#d8a030" stroke-width="0.6"/></g>
</svg>
<div class="a" style="left:734px;top:127px;width:186px;height:264px;background:#fff;border-top:1px solid #8c9098;border-left:1px solid #a4a8b2"></div>
<svg class="a" style="left:734px;top:127px" width="100" height="30" viewBox="734 127 100 30">
<rect x="741.3" y="135.3" width="11.5" height="11.2" fill="#fff" stroke="#909090" stroke-width="0.9"/>
<path d="M743.8 141H750.2M747 137.8V144.2" stroke="#222" stroke-width="1.8"/>
<path d="M753 141.2H764.5" stroke="#aaa" stroke-width="0.8" stroke-dasharray="1 1"/>
<g transform="translate(771.5 128.3) scale(0.108) translate(-165 -190)">
<g fill="none" stroke="#a888c8" stroke-linecap="round" stroke-linejoin="round">
<path d="M277.0 222.0C276.8 220.2 277.0 214.5 276.0 211.0C275.0 207.5 273.2 203.8 271.0 201.0C268.8 198.2 266.2 195.5 263.0 194.0C259.8 192.5 255.8 192.0 252.0 192.0C248.2 192.0 243.7 192.7 240.0 194.0C236.3 195.3 233.0 197.3 230.0 200.0C227.0 202.7 224.3 206.0 222.0 210.0C219.7 214.0 217.7 219.0 216.0 224.0C214.3 229.0 213.2 234.8 212.0 240.0C210.8 245.2 210.0 250.3 209.0 255.0C208.0 259.7 206.7 263.5 206.0 268.0C205.3 272.5 204.8 277.3 205.0 282.0C205.2 286.7 206.3 291.3 207.0 296.0C207.7 300.7 208.2 304.3 209.0 310.0C209.8 315.7 211.3 323.3 212.0 330.0C212.7 336.7 213.2 344.5 213.0 350.0C212.8 355.5 212.5 358.8 211.0 363.0C209.5 367.2 207.0 371.3 204.0 375.0C201.0 378.7 197.0 382.4 193.0 385.0C189.0 387.6 183.5 389.9 180.0 390.5C176.5 391.1 174.0 390.2 172.0 388.5C170.0 386.8 168.2 383.1 168.0 380.0C167.8 376.9 169.2 372.4 171.0 370.0C172.8 367.6 176.3 365.8 179.0 365.5C181.7 365.2 185.5 366.6 187.0 368.0C188.5 369.4 187.8 373.0 188.0 374.0" stroke-width="13"/>
<path d="M277.0 222.0C276.2 223.7 274.3 229.5 272.0 232.0C269.7 234.5 266.0 236.2 263.0 237.0C260.0 237.8 256.5 238.0 254.0 237.0C251.5 236.0 249.0 233.3 248.0 231.0C247.0 228.7 247.3 225.3 248.0 223.0C248.7 220.7 250.3 218.0 252.0 217.0C253.7 216.0 256.8 216.2 258.0 217.0C259.2 217.8 259.5 220.8 259.0 222.0C258.5 223.2 255.7 223.7 255.0 224.0" stroke-width="13"/>
<path d="M271.0 202.0C272.5 201.2 276.8 198.4 280.0 197.5C283.2 196.6 286.7 196.1 290.0 196.5C293.3 196.9 296.7 198.1 300.0 200.0C303.3 201.9 307.0 204.8 310.0 208.0C313.0 211.2 315.3 215.7 318.0 219.0C320.7 222.3 322.8 225.7 326.0 228.0C329.2 230.3 333.2 232.3 337.0 233.0C340.8 233.7 345.9 233.2 349.0 232.0C352.1 230.8 354.3 227.9 355.5 226.0C356.7 224.1 356.6 221.5 356.0 220.5C355.4 219.5 352.7 220.1 352.0 220.0" stroke-width="13"/>
<path d="M211.0 245.0C210.3 243.0 208.8 236.7 207.0 233.0C205.2 229.3 202.8 225.4 200.0 223.0C197.2 220.6 193.3 219.1 190.0 218.5C186.7 217.9 183.0 218.4 180.0 219.5C177.0 220.6 173.8 222.8 172.0 225.0C170.2 227.2 169.2 231.0 169.5 233.0C169.8 235.0 172.6 236.7 174.0 237.0C175.4 237.3 177.3 235.3 178.0 235.0" stroke-width="13"/>
<path d="M211.0 250.0C211.8 248.3 214.2 243.0 216.0 240.0C217.8 237.0 219.5 234.4 222.0 232.0C224.5 229.6 228.0 226.9 231.0 225.5C234.0 224.1 237.5 223.2 240.0 223.5C242.5 223.8 244.8 225.2 246.0 227.0C247.2 228.8 248.0 232.1 247.5 234.0C247.0 235.9 244.8 237.9 243.0 238.5C241.2 239.1 238.0 238.4 237.0 237.5C236.0 236.6 237.0 233.8 237.0 233.0" stroke-width="13"/>
<path d="M207.0 262.0C205.7 263.2 201.8 266.3 199.0 269.0C196.2 271.7 193.2 274.8 190.0 278.0C186.8 281.2 183.0 284.2 180.0 288.0C177.0 291.8 173.8 296.8 172.0 301.0C170.2 305.2 169.2 309.5 169.5 313.0C169.8 316.5 171.6 320.0 174.0 322.0C176.4 324.0 180.7 325.3 184.0 325.0C187.3 324.7 191.8 322.5 194.0 320.0C196.2 317.5 197.2 313.3 197.0 310.0C196.8 306.7 195.0 302.2 193.0 300.0C191.0 297.8 187.3 296.7 185.0 297.0C182.7 297.3 179.5 300.2 179.0 302.0C178.5 303.8 181.5 307.0 182.0 308.0" stroke-width="13"/>
<path d="M212.0 340.0C212.5 341.0 213.7 344.8 215.0 346.0C216.3 347.2 218.4 347.5 220.0 347.0C221.6 346.5 223.8 343.7 224.5 343.0" stroke-width="13"/>
</g><g fill="#a888c8">
<circle cx="175" cy="236" r="8.4"/>
<circle cx="353" cy="221" r="8"/>
<circle cx="255" cy="223" r="8"/>
<circle cx="237" cy="235" r="8"/>
<circle cx="182" cy="307" r="8"/>
<circle cx="186" cy="373" r="8.4"/>
</g></g>
<rect x="796.8" y="127.8" width="31.5" height="24" fill="#0000e6"/>
</svg>
<div class="a" style="left:731px;top:391px;width:190px;height:2px;background:#e4e8f0"></div>
<div class="a" style="left:731px;top:393px;width:190px;height:17px;background:linear-gradient(#c9d8ea,#dfe7f2)"></div>

<svg class="a" style="left:890px;top:393px" width="31" height="17" viewBox="890 393 31 17">
<path d="M898.5 399.3V403M902 399.3V403M897.5 403.2H903.2M900.3 403.2V405.8" stroke="#111" stroke-width="1.1"/><path d="M898.3 399.3H902.3" stroke="#111" stroke-width="1"/>
<rect x="908.8" y="397.3" width="10" height="10.3" rx="1.2" fill="#b06058" stroke="#d8a8a0" stroke-width="0.8"/>
<path d="M912 400.8L915.5 404.3M915.5 400.8L912 404.3" stroke="#f4e4e4" stroke-width="1"/>
</svg>
<div class="a" style="left:766px;top:411.5px;width:1.2px;height:13px;background:#6a6a6a"></div>
<div class="a" style="left:800.5px;top:411.5px;width:1.2px;height:13px;background:#6a6a6a"></div>


<div class="a" style="left:766px;top:424.5px;width:150px;height:1px;background:#fafafa"></div>
<div class="btn" style="left:743.5px;top:428.8px;width:46.7px;height:15.6px"></div>
<div class="btn" style="left:796.4px;top:428.8px;width:46.6px;height:15.6px;border-color:#505050;border-width:1px 1.5px 1.5px 1px"></div>
<div class="btn" style="left:849.3px;top:428.8px;width:46.7px;height:15.6px"></div>

<div class="a" style="left:743px;top:461px;width:172px;height:226px;background:#fff;border-right:1.5px solid #a8a8a8;border-top:1px solid #e0e0e0"></div>
<div class="a" style="left:744.5px;top:465.2px;width:56px;height:28px;background:#b06fc8;box-shadow:1px 1px 0 #8a5a9a"></div>


<div class="a" style="left:734px;top:687px;width:186px;height:1px;background:#a8a8a8"></div>
<div class="a" style="left:919.5px;top:127px;width:1.5px;height:565px;background:#c8c8c8"></div>
<div class="a" style="left:733px;top:692px;width:188px;height:1.3px;background:#8a8a8a"></div>
<div class="a" style="left:0;top:693px;width:921px;height:14px;background:#f0f0f0"></div>




<div class="a" style="left:0;top:707px;width:921px;height:29px;background:radial-gradient(ellipse 40px 12px at 500px 18px,rgba(120,130,155,0.35),transparent),radial-gradient(ellipse 60px 14px at 610px 12px,rgba(110,120,145,0.3),transparent),radial-gradient(ellipse 50px 12px at 860px 14px,rgba(120,130,160,0.3),transparent),radial-gradient(ellipse 70px 12px at 420px 20px,rgba(15,18,28,0.35),transparent),linear-gradient(90deg,#1e2436 0%,#262c40 12%,#2a3044 30%,#343a50 45%,#3a4258 60%,#2e3448 72%,#363e56 85%,#3e4660 100%)"></div>
<div class="a" style="left:0;top:707px;width:921px;height:1px;background:#6a7088"></div>
<svg class="a" style="left:0;top:707px" width="921" height="29" viewBox="0 707 921 29">
<defs>
<radialGradient id="orb" cx="0.5" cy="0.75" r="0.65"><stop offset="0" stop-color="#60d8f8"/><stop offset="0.45" stop-color="#2888d0"/><stop offset="1" stop-color="#184878"/></radialGradient>
<linearGradient id="gbtn" x1="0" y1="0" x2="0" y2="1"><stop offset="0" stop-color="#6a7080"/><stop offset="1" stop-color="#3a4050"/></linearGradient>
<linearGradient id="gbtna" x1="0" y1="0" x2="0" y2="1"><stop offset="0" stop-color="#c8ccd4"/><stop offset="1" stop-color="#9ca0ac"/></linearGradient>
</defs>
<circle cx="18.6" cy="721.5" r="12.5" fill="url(#orb)" stroke="#183050" stroke-width="1"/>
<path d="M12 716L17.5 715V720.5H12Z" fill="#f04820"/><path d="M19 714.8L25 714V720.5H19Z" fill="#70c030"/>
<path d="M12 722H17.5V727.5L12 726.5Z" fill="#30a0f0"/><path d="M19 722H25V728.5L19 727.7Z" fill="#f8c020"/>
<rect x="52" y="713" width="24" height="19" rx="1.5" fill="#f0d890" stroke="#c8a850" stroke-width="0.8"/>
<rect x="52" y="713" width="24" height="5" fill="#e8e0c0"/>
<rect x="57" y="724" width="14" height="8" fill="#5ab0e0"/>
<ellipse cx="108.5" cy="722.5" rx="11" ry="6" transform="rotate(-30 108.5 722.5)" fill="none" stroke="#e8c030" stroke-width="1.6"/>
<text x="98" y="732.5" font-size="25" font-weight="bold" fill="#3ab0f0" font-family="Liberation Sans">e</text>
<rect x="143" y="714" width="19" height="17.5" rx="1.5" fill="#8ab8e0" stroke="#c0d8f0" stroke-width="0.8"/>
<circle cx="152.5" cy="722.8" r="6.3" fill="#f08a30"/><path d="M150.3 719.5V726L155.5 722.8Z" fill="#fff"/>
<rect x="177" y="708.2" width="42" height="26.5" rx="2" fill="url(#gbtn)" stroke="#8a90a0" stroke-width="0.8" opacity="0.7"/>
<circle cx="197" cy="721" r="9.5" fill="#30a0e0"/>
<text x="190.5" y="727.5" font-size="16" font-weight="bold" fill="#fff" font-family="Liberation Sans">S</text>
<circle cx="204" cy="729" r="4.2" fill="#c8f060"/>
<rect x="222" y="708.2" width="42" height="26.5" rx="2" fill="url(#gbtn)" stroke="#8a90a0" stroke-width="0.8" opacity="0.7"/>
<rect x="232" y="712.5" width="22" height="17" fill="#3a78c8"/>
<rect x="234" y="714.5" width="18" height="13" fill="#58a8d8"/>
<path d="M234 724C238 719 244 720 252 722V727.5H234Z" fill="#407860"/>
<rect x="266" y="708.2" width="42" height="26.5" rx="2" fill="url(#gbtn)" stroke="#8a90a0" stroke-width="0.8" opacity="0.7"/>
<rect x="279" y="711" width="18" height="20" fill="#f8d070"/>
<circle cx="284" cy="720" r="6" fill="#e89020"/><circle cx="284" cy="720" r="3" fill="#f8e0b0"/>
<rect x="288" y="724" width="10" height="8.5" fill="#f8e8a8" stroke="#c0a060" stroke-width="0.6"/>
<path d="M288 724L293 728.5L298 724" fill="none" stroke="#c0a060" stroke-width="0.6"/>
<rect x="310.5" y="708" width="41" height="28" rx="2" fill="url(#gbtna)" stroke="#d8dce4" stroke-width="0.8"/>
<rect x="319" y="711" width="21.5" height="21" rx="1.5" fill="#6a8a38"/>
<rect x="326" y="713" width="12" height="10" fill="#60a848" opacity="0.7"/>
<text x="321" y="724" font-size="13" font-style="italic" fill="#f4f4e8" font-family="Liberation Serif">E</text>
<text x="325" y="732" font-size="12" font-style="italic" fill="#f4f4e8" font-family="Liberation Serif">W</text>
<path d="M793.8 724.5L796.4 721L799 724.5Z" fill="#e8e8f0"/>
<path d="M809 717.5V727.5" stroke="#e0e0e8" stroke-width="1.3"/><path d="M809.5 718H815L818 721L815 723.5H809.5Z" fill="#e8e8f0"/>
<rect x="828" y="719" width="9" height="6.5" fill="none" stroke="#e0e0e8" stroke-width="1.2"/><path d="M830 727.5H835M832.5 725.5V727.5" stroke="#e0e0e8" stroke-width="1"/><rect x="825.5" y="717.5" width="3" height="4" fill="#d0d0d8"/>
<path d="M844.5 720.5H847L850 718V727.5L847 725H844.5Z" fill="#e8e8f0"/><path d="M852 720A4 4 0 0 1 852 725" fill="none" stroke="#c0c0c8" stroke-width="0.8"/>
<rect x="911" y="709" width="10" height="27" fill="#3a4258" stroke="#7a8098" stroke-width="0.8"/>
</svg>


<div class="t" style="left:15.60px;top:3.38px;font-size:9px;color:#1c1c28;letter-spacing:-0.309px">EmbroideryWorks -</div>
<div class="t" style="left:94.70px;top:3.38px;font-size:9px;color:#1c1c28;letter-spacing:-0.412px">heart.pes *</div>
<div class="t" style="left:5.20px;top:18.96px;font-size:8.2px;color:#1a1a1a;letter-spacing:-0.371px">File</div>
<div class="t" style="left:18.20px;top:63.30px;font-size:8.5px;color:#333;transform:scaleX(0.763);transform-origin:0 0">mm</div>
<div class="t" style="left:18.20px;top:74.40px;font-size:8.5px;color:#333;transform:scaleX(0.827);transform-origin:0 0">inch</div>
<div class="t" style="left:57.90px;top:62.60px;font-size:8.5px;color:#383838;transform:scaleX(0.907);transform-origin:0 0">93.80</div>
<div class="t" style="left:57.90px;top:77.80px;font-size:8.5px;color:#383838;transform:scaleX(0.907);transform-origin:0 0">99.00</div>
<div class="t" style="left:99.30px;top:62.70px;font-size:8.5px;color:#383838;transform:scaleX(0.892);transform-origin:0 0">100.0%</div>
<div class="t" style="left:99.30px;top:77.70px;font-size:8.5px;color:#383838;transform:scaleX(0.892);transform-origin:0 0">100.0%</div>
<div class="t" style="left:161.40px;top:77.80px;font-size:8.5px;color:#383838;letter-spacing:0.129px">0.0°</div>
<div class="t" style="left:356.20px;top:61.80px;font-size:8.5px;color:#383838;letter-spacing:-0.440px">-47.53</div>
<div class="t" style="left:356.20px;top:77.70px;font-size:8.5px;color:#383838;letter-spacing:-0.442px">50.14</div>
<div class="t" style="left:34.80px;top:97.77px;font-size:7.6px;color:#3c2c08;font-weight:bold;letter-spacing:-0.042px">heart *</div>
<div class="t" style="left:81.00px;top:97.57px;font-size:7.6px;color:#263018;font-weight:bold;letter-spacing:-0.006px">heart.pes *</div>
<div class="t" style="left:737.00px;top:95.95px;font-size:8.8px;color:#6a7a8e;transform:scaleX(0.885);transform-origin:0 0;-webkit-text-stroke:0">Objects</div>
<div class="t" style="left:737.00px;top:398.85px;font-size:8.8px;color:#6a7a8e;letter-spacing:-0.434px;-webkit-text-stroke:0">Properties</div>
<div class="t" style="left:739.20px;top:413.20px;font-size:8.5px;color:#333;transform:scaleX(0.817);transform-origin:0 0">Color</div>
<div class="t" style="left:770.20px;top:414.30px;font-size:8.5px;color:#333;transform:scaleX(0.853);transform-origin:0 0">Stitches</div>
<div class="t" style="left:751.80px;top:432.17px;font-size:8.3px;color:#222;transform:scaleX(0.879);transform-origin:0 0">Thread...</div>
<div class="t" style="left:804.70px;top:432.17px;font-size:8.3px;color:#222;transform:scaleX(0.849);transform-origin:0 0">1 Color...</div>
<div class="t" style="left:857.00px;top:432.17px;font-size:8.3px;color:#222;transform:scaleX(0.864);transform-origin:0 0">Preferred</div>
<div class="t" style="left:752.80px;top:448.27px;font-size:8.3px;color:#333;letter-spacing:-0.292px">Click below to change individual colors.</div>
<div class="t" style="left:803.70px;top:467.30px;font-size:8.5px;color:#222;transform:scaleX(0.905);transform-origin:0 0">1: RA Rayon</div>
<div class="t" style="left:803.70px;top:475.80px;font-size:8.5px;color:#222;transform:scaleX(0.865);transform-origin:0 0">2288 Iris</div>
<div class="t" style="left:798.70px;top:136.36px;font-size:8.2px;color:#e8e8ff;transform:scaleX(0.884);transform-origin:0 0">BOR216</div>
<div class="t" style="left:765.60px;top:136.25px;font-size:8.8px;color:#222">1</div>
<div class="t" style="left:2.60px;top:697.47px;font-size:8.3px;color:#2a2a2a;letter-spacing:-0.269px">Zoom: 100%&nbsp; Cursor: 148.7mm x -29.8mm</div>
<div class="t" style="left:675.60px;top:697.97px;font-size:8.3px;color:#2a2a2a;letter-spacing:-0.364px">Selected: 93.8mm x 99.0mm</div>
<div class="t" style="left:791.70px;top:697.97px;font-size:8.3px;color:#2a2a2a;letter-spacing:-0.265px">Stitches:1184</div>
<div class="t" style="left:849.80px;top:697.97px;font-size:8.3px;color:#2a2a2a;letter-spacing:-0.159px">Ndls/Cols: 1/1</div>
<div class="t" style="left:869.60px;top:712.22px;font-size:8.6px;color:#f0f0f4;letter-spacing:-0.371px">4:26 PM</div>
<div class="t" style="left:865.80px;top:724.52px;font-size:8.6px;color:#f0f0f4;letter-spacing:-0.215px">10/4/2011</div>
</body></html>
